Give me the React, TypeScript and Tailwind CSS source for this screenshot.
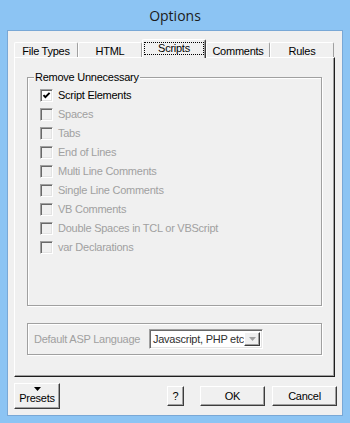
import React from "react";

const font = { fontFamily: '"Liberation Sans", Arial, sans-serif' };

// classic 3D raised button
const raised =
  "bg-[#f0f0f0] border border-t-white border-l-white border-r-[#3c3c3c] border-b-[#3c3c3c] shadow-[inset_-1px_-1px_0_#a0a0a0]";
// classic sunken edge (checkbox, combo)
const sunken =
  "border border-t-[#a0a0a0] border-l-[#a0a0a0] border-r-white border-b-white shadow-[inset_1px_1px_0_#696969,inset_-1px_-1px_0_#e3e3e3]";

function Check({ label, checked, disabled }: { label: string; checked?: boolean; disabled?: boolean }) {
  return (
    <div className="flex h-[19px] items-center">
      <div
        className={`flex h-[13px] w-[13px] items-center justify-center ${sunken} ${
          disabled ? "bg-[#f0f0f0]" : "bg-white"
        }`}
      >
        {checked && (
          <svg width="9" height="9" viewBox="0 0 9 9">
            <polyline points="1.5,4.2 3.4,6.2 7.6,1.8" fill="none" stroke="#000" strokeWidth="1.9" />
          </svg>
        )}
      </div>
      <span className={`ml-[5px] ${disabled ? "text-[#a0a0a0]" : "text-black"}`}>{label}</span>
    </div>
  );
}

function Tab({ label, active }: { label: string; active?: boolean }) {
  if (active) {
    return (
      <div className="relative z-10 -mb-[1px] flex h-[19px] w-[64px] flex-col rounded-t-[2px] border-t border-l border-r border-t-white border-l-white border-r-[#3c3c3c] bg-[#f0f0f0] px-[1px] shadow-[inset_-1px_0_0_#a0a0a0]">
        <div className="mt-[2px] flex h-[13px] items-center justify-center border border-dotted border-black">
          {label}
        </div>
      </div>
    );
  }
  return (
    <div className="flex h-[15px] w-[64px] items-center justify-center rounded-t-[2px] border-t border-l border-r border-t-white border-l-white border-r-[#a0a0a0] bg-[#f0f0f0] pt-[3px]">
      {label}
    </div>
  );
}

const items = [
  "Spaces",
  "Tabs",
  "End of Lines",
  "Multi Line Comments",
  "Single Line Comments",
  "VB Comments",
  "Double Spaces in TCL or VBScript",
  "var Declarations",
];

export default function App() {
  return (
    <div className="flex h-[423px] w-[350px] flex-col bg-[#8cc4f3] text-[11px] leading-[13px] tracking-[-0.25px]" style={font}>
      {/* title bar */}
      <div
        className="flex h-[30px] items-center justify-center pt-[1px] text-[14px] tracking-normal text-[#1b1b1b]"
        style={{ fontFamily: '"Open Sans", "Noto Sans", sans-serif' }}
      >
        Options
      </div>

      {/* client area */}
      <div className="ml-[7px] flex h-[386px] w-[336px] flex-col border border-[#79a8d6] bg-[#f0f0f0]">
        {/* tabs */}
        <div className="mt-[8px] flex h-[18px] items-end pl-[6px]">
          <Tab label="File Types" />
          <Tab label="HTML" />
          <Tab label="Scripts" active />
          <Tab label="Comments" />
          <Tab label="Rules" />
        </div>

        {/* tab panel */}
        <div className="ml-[6px] flex h-[320px] w-[321px] flex-col border border-t-white border-l-white border-r-[#1e1e1e] border-b-[#1e1e1e] shadow-[inset_-1px_-1px_0_#a0a0a0]">
          <div className="ml-[12px] mt-[19px] flex h-[229px] w-[295px] flex-col border border-[#a0a0a0] pl-[12px] shadow-[1px_1px_0_#fff,inset_1px_1px_0_#fff]">
            <span className="-mt-[7px] -ml-[6px] self-start bg-[#f0f0f0] px-[1px]">Remove Unnecessary</span>
            <div className="mt-[2px] flex flex-col">
              <Check label="Script Elements" checked />
              {items.map((t) => (
                <Check key={t} label={t} disabled />
              ))}
            </div>
          </div>

          <div className="ml-[12px] mt-[17px] flex h-[32px] w-[295px] items-center border border-[#a0a0a0] pl-[6px] shadow-[1px_1px_0_#fff,inset_1px_1px_0_#fff]">
            <span className="w-[115px] text-[#a0a0a0]">Default ASP Language</span>
            <div className={`flex h-[20px] w-[114px] items-stretch bg-white p-[2px] ${sunken}`}>
              <div className="flex-1 overflow-hidden whitespace-nowrap pl-[1px] pt-[1px] text-[#303030]">
                Javascript, PHP etc
              </div>
              <div className={`flex w-[16px] items-center justify-center ${raised}`}>
                <svg width="7" height="4" viewBox="0 0 7 4">
                  <polygon points="0,0 7,0 3.5,4" fill="#a0a0a0" />
                </svg>
              </div>
            </div>
          </div>
        </div>

        {/* buttons */}
        <div className="mt-[6px] flex h-[26px] items-center pl-[6px] pr-[5px]">
          <button className={`flex h-[26px] w-[46px] flex-col items-center ${raised}`}>
            <svg className="mt-[3px]" width="7" height="4" viewBox="0 0 7 4">
              <polygon points="0,0 7,0 3.5,4" fill="#000" />
            </svg>
            <span className="mt-[1px]">Presets</span>
          </button>
          <button className={`ml-auto h-[20px] w-[17px] ${raised}`}>?</button>
          <button className={`ml-[16px] h-[20px] w-[65px] ${raised}`}>OK</button>
          <button className={`ml-[7px] h-[20px] w-[65px] ${raised}`}>Cancel</button>
        </div>
      </div>
    </div>
  );
}
